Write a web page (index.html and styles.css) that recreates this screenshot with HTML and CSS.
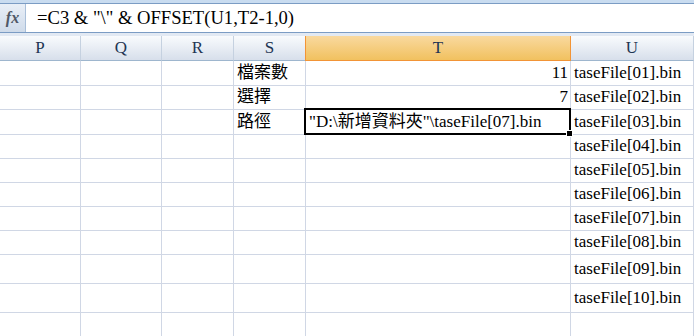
FILE: index.html
```html
<!DOCTYPE html>
<html>
  <head>
    <title>Sheet</title>
    <meta charset="UTF-8" />
    <link rel="stylesheet" href="styles.css">
  </head>
  <body>
    <div class="top-strip"></div>
    <div class="formula-bar">
      <div class="fx">fx</div>
      <div class="formula">=C3 &amp; "\" &amp; OFFSET(U1,T2-1,0)</div>
    </div>
    <div class="gap"></div>

    <div class="sheet">
      <div class="col-head">P</div>
      <div class="col-head">Q</div>
      <div class="col-head">R</div>
      <div class="col-head">S</div>
      <div class="col-head active">T</div>
      <div class="col-head">U</div>

      <div class="cell r1"></div><div class="cell r1"></div><div class="cell r1"></div>
      <div class="cell r1">檔案數</div>
      <div class="cell r1 num">11</div>
      <div class="cell r1">taseFile[01].bin</div>

      <div class="cell r2"></div><div class="cell r2"></div><div class="cell r2"></div>
      <div class="cell r2">選擇</div>
      <div class="cell r2 num">7</div>
      <div class="cell r2">taseFile[02].bin</div>

      <div class="cell r1"></div><div class="cell r1"></div><div class="cell r1"></div>
      <div class="cell r1">路徑</div>
      <div class="cell r1 selected">"D:\新增資料夾"\taseFile[07].bin<span class="handle"></span></div>
      <div class="cell r1">taseFile[03].bin</div>

      <div class="cell r2"></div><div class="cell r2"></div><div class="cell r2"></div>
      <div class="cell r2"></div><div class="cell r2"></div>
      <div class="cell r2">taseFile[04].bin</div>

      <div class="cell r2"></div><div class="cell r2"></div><div class="cell r2"></div>
      <div class="cell r2"></div><div class="cell r2"></div>
      <div class="cell r2">taseFile[05].bin</div>

      <div class="cell r2"></div><div class="cell r2"></div><div class="cell r2"></div>
      <div class="cell r2"></div><div class="cell r2"></div>
      <div class="cell r2">taseFile[06].bin</div>

      <div class="cell r2"></div><div class="cell r2"></div><div class="cell r2"></div>
      <div class="cell r2"></div><div class="cell r2"></div>
      <div class="cell r2">taseFile[07].bin</div>

      <div class="cell r2"></div><div class="cell r2"></div><div class="cell r2"></div>
      <div class="cell r2"></div><div class="cell r2"></div>
      <div class="cell r2">taseFile[08].bin</div>

      <div class="cell r3"></div><div class="cell r3"></div><div class="cell r3"></div>
      <div class="cell r3"></div><div class="cell r3"></div>
      <div class="cell r3">taseFile[09].bin</div>

      <div class="cell r3"></div><div class="cell r3"></div><div class="cell r3"></div>
      <div class="cell r3"></div><div class="cell r3"></div>
      <div class="cell r3">taseFile[10].bin</div>

      <div class="cell r3"></div><div class="cell r3"></div><div class="cell r3"></div>
      <div class="cell r3"></div><div class="cell r3"></div>
      <div class="cell r3"></div>
    </div>
  </body>
</html>
```

FILE: styles.css
```css
body {
  margin: 0;
  width: 694px;
  height: 336px;
  overflow: hidden;
  background-color: white;
  font-family: "Liberation Serif", "Noto Sans CJK TC", serif;
  color: black;
}

.top-strip {
  height: 3px;
  background-color: #c9dcf0;
  border-bottom: 1px solid #7b9cc4;
}

.formula-bar {
  display: flex;
  height: 28px;
  border-bottom: 1px solid #7b9cc4;
}

.fx {
  width: 25px;
  border-right: 1px solid #a9bfd9;
  background: linear-gradient(#e9eff7, #cfdbea);
  font-style: italic;
  font-weight: bold;
  font-size: 16px;
  color: #4f5866;
  display: flex;
  align-items: center;
  justify-content: center;
}

.formula {
  flex: 1;
  padding-left: 11px;
  font-size: 18.6px;
  line-height: 28px;
}

.gap {
  height: 3px;
  background-color: #e2e9f3;
}

.sheet {
  display: grid;
  grid-template-columns: 81px 81px 72px 72px 265px 1fr;
  grid-template-rows: 25px;
}

.col-head {
  height: 24px;
  border-right: 1px solid #c5d1e0;
  border-bottom: 1px solid #9eb6ce;
  background: linear-gradient(#f9fbfd, #d7dfeb);
  color: #1e3553;
  font-size: 17px;
  display: flex;
  align-items: center;
  justify-content: center;
}

.col-head.active {
  background: linear-gradient(#f9d99f, #f1c15f);
  border-right-color: #f29436;
  border-bottom-color: #f29436;
  box-shadow: -1px 0 0 #f29436;
}

.cell {
  position: relative;
  border-right: 1px solid #d0d7e5;
  border-bottom: 1px solid #d0d7e5;
  font-size: 17px;
  line-height: 20px;
  padding: 0 2px 2px 3px;
  display: flex;
  align-items: flex-end;
  white-space: nowrap;
}

.r1 { height: 22px; }
.r2 { height: 21px; }
.r3 { height: 24px; padding-bottom: 4px; }

.num {
  justify-content: flex-end;
}

.selected::after {
  content: "";
  position: absolute;
  left: -2px;
  top: -2px;
  right: -1px;
  bottom: -1px;
  border: 2px solid black;
}

.handle {
  position: absolute;
  right: -3px;
  bottom: -3px;
  width: 5px;
  height: 5px;
  background-color: black;
  border: 1px solid white;
  z-index: 1;
}
```
